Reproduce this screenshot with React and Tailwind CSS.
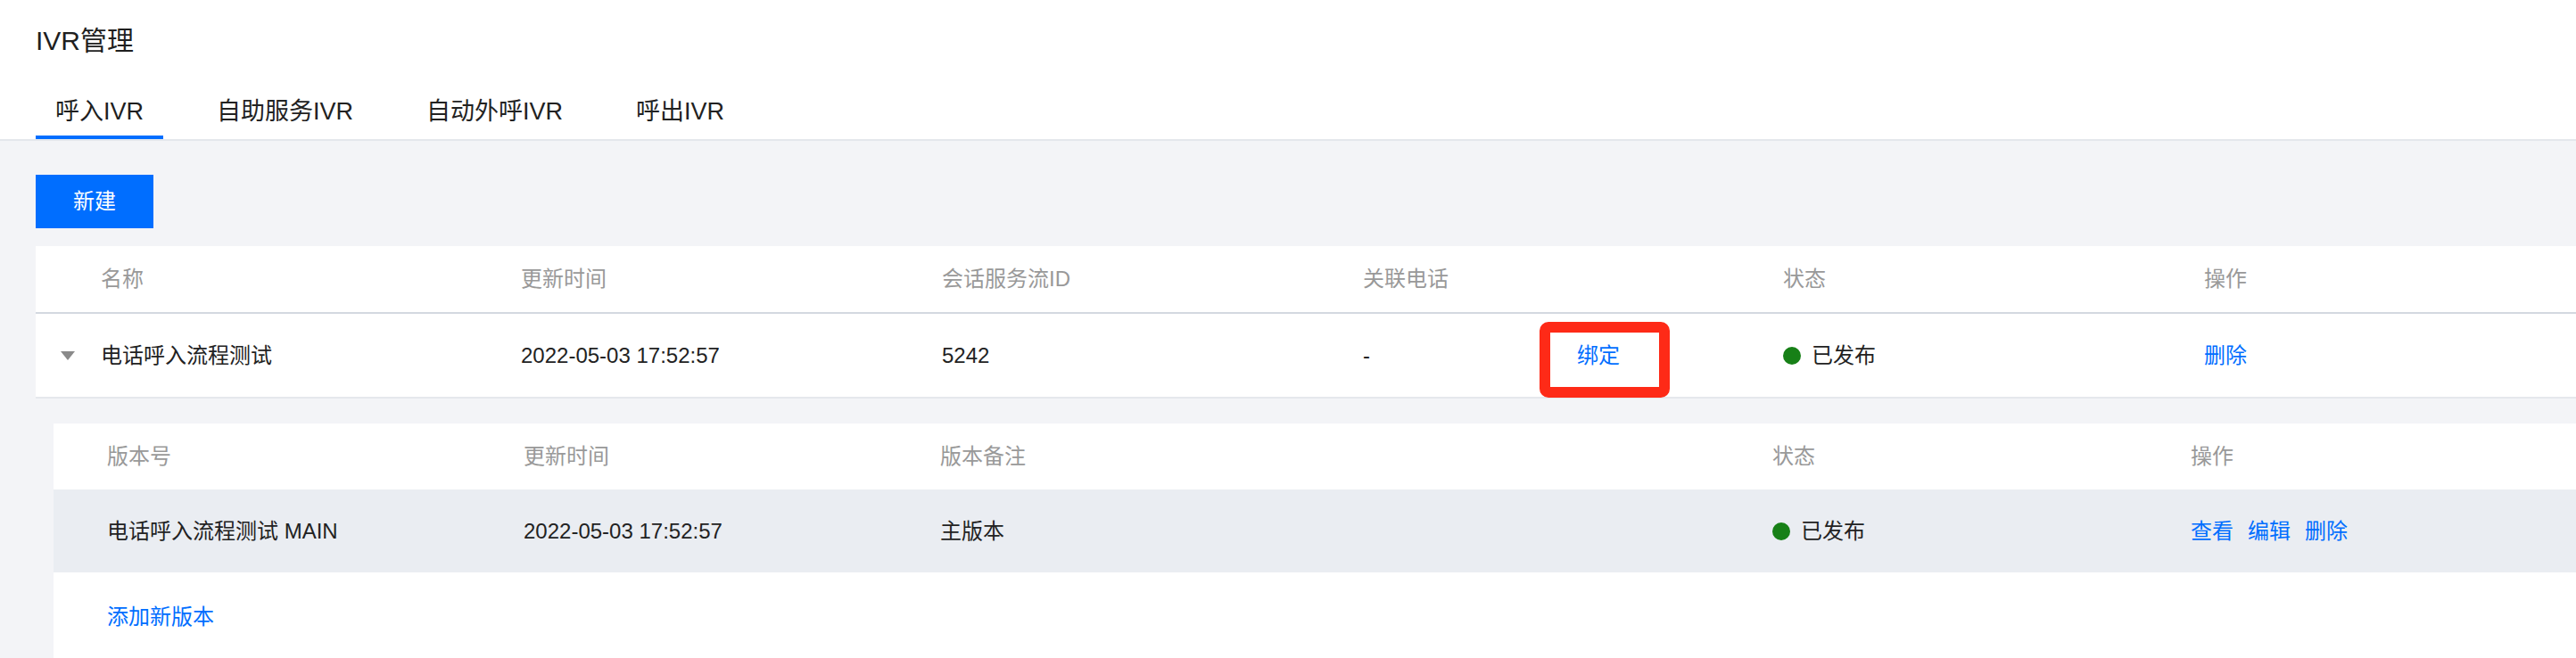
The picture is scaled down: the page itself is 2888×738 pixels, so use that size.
import { useState } from 'react'

const TABS = ['呼入IVR', '自助服务IVR', '自动外呼IVR', '呼出IVR']

function Caret() {
  return (
    <svg width="16" height="10" viewBox="0 0 16 10" className="block">
      <polygon points="0,0 16,0 8,10" fill="#8a8a8a" />
    </svg>
  )
}

function Status({ label }) {
  return (
    <span className="flex items-center gap-[12px]">
      <span className="w-[20px] h-[20px] rounded-full bg-[#178017]" />
      <span>{label}</span>
    </span>
  )
}

function IvrTable() {
  return (
    <div className="bg-white">
      {/* header */}
      <div className="grid grid-cols-[73px_471px_472px_472px_471px_472px_1fr] h-[76px] border-b-2 border-[#d3d8e0] text-[#999999]">
        <div />
        <div className="flex items-center">名称</div>
        <div className="flex items-center">更新时间</div>
        <div className="flex items-center">会话服务流ID</div>
        <div className="flex items-center">关联电话</div>
        <div className="flex items-center">状态</div>
        <div className="flex items-center">操作</div>
      </div>
      {/* row */}
      <div className="grid grid-cols-[73px_471px_472px_472px_471px_472px_1fr] h-[95px] border-b-2 border-[#e5e8ed] text-[#222222]">
        <div className="flex items-center pl-[28px]">
          <Caret />
        </div>
        <div className="flex items-center">电话呼入流程测试</div>
        <div className="flex items-center">2022-05-03 17:52:57</div>
        <div className="flex items-center">5242</div>
        <div className="relative flex items-center">
          <span className="w-[240px]">-</span>
          <a className="text-[#006eff] cursor-pointer">绑定</a>
          {/* annotation box */}
          <div className="absolute top-[9px] left-[198px] w-[146px] h-[85px] border-[12px] border-[#fe2a17] rounded-[10px]" />
        </div>
        <div className="flex items-center">
          <Status label="已发布" />
        </div>
        <div className="flex items-center">
          <a className="text-[#006eff] cursor-pointer">删除</a>
        </div>
      </div>
    </div>
  )
}

function VersionTable() {
  return (
    <div className="ml-[20px] bg-white">
      <div className="grid grid-cols-[60px_467px_467px_933px_469px_1fr] h-[74px] text-[#999999]">
        <div />
        <div className="flex items-center">版本号</div>
        <div className="flex items-center">更新时间</div>
        <div className="flex items-center">版本备注</div>
        <div className="flex items-center">状态</div>
        <div className="flex items-center">操作</div>
      </div>
      <div className="grid grid-cols-[60px_467px_467px_933px_469px_1fr] h-[93px] bg-[#eaedf2] text-[#222222]">
        <div />
        <div className="flex items-center">电话呼入流程测试 MAIN</div>
        <div className="flex items-center">2022-05-03 17:52:57</div>
        <div className="flex items-center">主版本</div>
        <div className="flex items-center">
          <Status label="已发布" />
        </div>
        <div className="flex items-center gap-[16px] text-[#006eff]">
          <a className="cursor-pointer">查看</a>
          <a className="cursor-pointer">编辑</a>
          <a className="cursor-pointer">删除</a>
        </div>
      </div>
      <div className="h-[100px] flex items-center pl-[60px]">
        <a className="text-[#006eff] cursor-pointer">添加新版本</a>
      </div>
    </div>
  )
}

export default function App() {
  const [activeTab, setActiveTab] = useState(0)

  return (
    <div
      className="min-h-screen bg-[#f3f4f7] text-[24px] leading-[28px]"
      style={{ fontFamily: '"Liberation Sans", "Noto Sans CJK SC", sans-serif' }}
    >
      {/* Page header */}
      <div className="bg-white border-b-2 border-[#e4e7ec] pl-[40px] pt-[31px]">
        <h1 className="text-[30px] leading-[30px] text-[#1f1f1f]">IVR管理</h1>
        <div className="flex gap-[38px] mt-[50px]">
          {TABS.map((t, i) => (
            <button
              key={t}
              onClick={() => setActiveTab(i)}
              className={`px-[22px] pb-[13px] text-[27px] leading-[28px] border-b-4 ${
                activeTab === i ? 'border-[#006eff] text-[#1f1f1f]' : 'border-transparent text-[#222222]'
              }`}
            >
              {t}
            </button>
          ))}
        </div>
      </div>

      {/* Content */}
      <div className="pl-[40px] pt-[38px]">
        <button className="w-[132px] h-[60px] bg-[#006eff] text-white text-[24px]">新建</button>
        <div className="mt-[20px]">
          <IvrTable />
        </div>
        <div className="mt-[28px]">
          <VersionTable />
        </div>
      </div>
    </div>
  )
}
